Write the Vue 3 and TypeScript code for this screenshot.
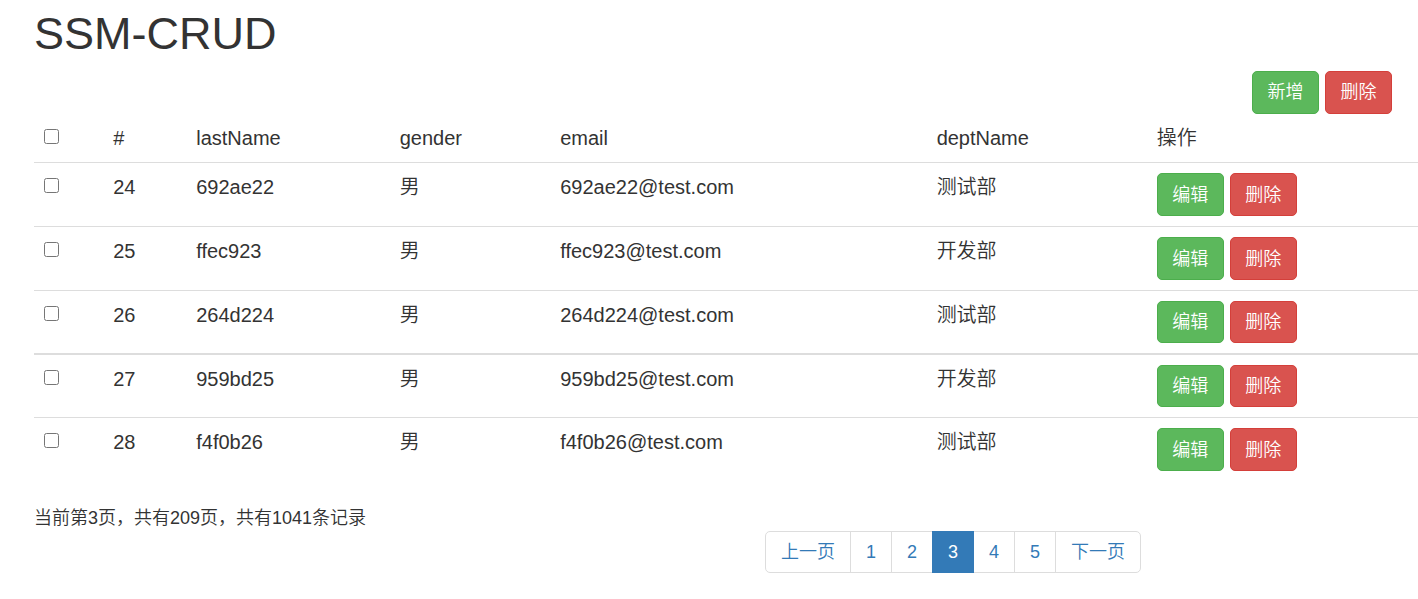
<script setup lang="ts">
import { computed, ref } from 'vue'

interface Employee {
  id: number
  lastName: string
  gender: string
  email: string
  deptName: string
}

const employees: Employee[] = [
  { id: 24, lastName: '692ae22', gender: '男', email: '692ae22@test.com', deptName: '测试部' },
  { id: 25, lastName: 'ffec923', gender: '男', email: 'ffec923@test.com', deptName: '开发部' },
  { id: 26, lastName: '264d224', gender: '男', email: '264d224@test.com', deptName: '测试部' },
  { id: 27, lastName: '959bd25', gender: '男', email: '959bd25@test.com', deptName: '开发部' },
  { id: 28, lastName: 'f4f0b26', gender: '男', email: 'f4f0b26@test.com', deptName: '测试部' },
]

const pages = [1, 2, 3, 4, 5]
const current = ref(3)
const totalPages = 209
const totalRecords = 1041

const selected = ref<number[]>([])
const allSelected = computed({
  get: () => selected.value.length === employees.length,
  set: (on: boolean) => {
    selected.value = on ? employees.map((e) => e.id) : []
  },
})
</script>

<template>
  <main class="page">
    <h1 class="title">SSM-CRUD</h1>

    <div class="toolbar">
      <button type="button" class="btn btn-success">新增</button>
      <button type="button" class="btn btn-danger">删除</button>
    </div>

    <table class="table">
      <colgroup>
        <col class="c-check" />
        <col class="c-id" />
        <col class="c-name" />
        <col class="c-gender" />
        <col class="c-email" />
        <col class="c-dept" />
        <col />
      </colgroup>
      <thead>
        <tr>
          <th><input v-model="allSelected" type="checkbox" class="check" aria-label="全选" /></th>
          <th>#</th>
          <th>lastName</th>
          <th>gender</th>
          <th>email</th>
          <th>deptName</th>
          <th>操作</th>
        </tr>
      </thead>
      <tbody>
        <tr v-for="e in employees" :key="e.id">
          <td><input v-model="selected" type="checkbox" class="check" :value="e.id" :aria-label="e.lastName" /></td>
          <td>{{ e.id }}</td>
          <td>{{ e.lastName }}</td>
          <td>{{ e.gender }}</td>
          <td>{{ e.email }}</td>
          <td>{{ e.deptName }}</td>
          <td>
            <div class="actions">
              <button type="button" class="btn btn-success">编辑</button>
              <button type="button" class="btn btn-danger">删除</button>
            </div>
          </td>
        </tr>
      </tbody>
    </table>

    <div class="footer">
      <p class="info">当前第{{ current }}页，共有{{ totalPages }}页，共有{{ totalRecords }}条记录</p>
      <nav aria-label="分页">
        <ul class="pagination">
          <li><a href="#" @click.prevent="current = Math.max(1, current - 1)">上一页</a></li>
          <li v-for="p in pages" :key="p" :class="{ active: p === current }">
            <a href="#" @click.prevent="current = p">{{ p }}</a>
          </li>
          <li><a href="#" @click.prevent="current = Math.min(5, current + 1)">下一页</a></li>
        </ul>
      </nav>
    </div>
  </main>
</template>

<style>
body {
  margin: 0;
  background: #fff;
}
</style>

<style scoped>
.page {
  padding: 9px 0 0 34px;
  color: #333;
  font-family: "Liberation Sans", Arial, "Noto Sans CJK SC", sans-serif;
  font-size: 18px;
  font-weight: 350;
  line-height: 25px;
}

.title {
  margin: 0 0 12px;
  font-size: 45px;
  font-weight: 400;
  line-height: 50px;
}

.toolbar {
  display: flex;
  justify-content: flex-end;
  gap: 6px;
  padding-right: 26px;
}

.btn {
  box-sizing: border-box;
  width: 67px;
  height: 43px;
  padding: 0;
  border: 1px solid;
  border-radius: 5px;
  color: #fff;
  font: inherit;
  font-size: 18px;
  white-space: nowrap;
  cursor: pointer;
}

.btn-success {
  background: #5cb85c;
  border-color: #4cae4c;
}

.btn-danger {
  background: #d9534f;
  border-color: #d43f3a;
}

.table {
  width: 100%;
  table-layout: fixed;
  border-collapse: separate;
  border-spacing: 0;
  font-size: 20px;
  line-height: 28px;
}

.c-check { width: 5%; }
.c-id { width: 6%; }
.c-name { width: 14.7%; }
.c-gender { width: 11.6%; }
.c-email { width: 27.2%; }
.c-dept { width: 15.9%; }

.table th,
.table td {
  padding: 10px;
  font-weight: inherit;
  text-align: left;
  vertical-align: top;
}

.table td {
  border-top: 1px solid #ddd;
}

.table tr:nth-child(4) td {
  border-top-width: 2px;
}

.table tr:nth-child(3) .btn,
.table tr:nth-child(4) .btn {
  height: 42px;
}

.check {
  display: block;
  width: 15px;
  height: 15px;
  margin: 5px 0 0;
}

.actions {
  display: flex;
  gap: 6px;
}

.footer {
  display: grid;
  grid-template-columns: 731fr 653fr;
  padding-top: 25px;
}

.info {
  margin: 0;
}

.pagination {
  display: flex;
  margin: 25px 0;
  padding: 0;
  list-style: none;
}

.pagination li + li {
  margin-left: -1px;
}

.pagination a {
  display: block;
  padding: 8px 15px;
  border: 1px solid #ddd;
  line-height: 24px;
  color: #337ab7;
  text-decoration: none;
  white-space: nowrap;
}

.pagination li:first-child a {
  border-radius: 5px 0 0 5px;
}

.pagination li:last-child a {
  border-radius: 0 5px 5px 0;
}

.pagination .active {
  z-index: 1;
}

.pagination .active a {
  background: #337ab7;
  border-color: #337ab7;
  color: #fff;
}
</style>
